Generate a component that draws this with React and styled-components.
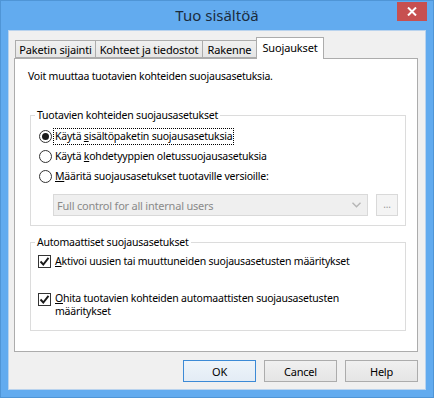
import React from 'react';
import styled, { createGlobalStyle } from 'styled-components';

const GlobalStyle = createGlobalStyle`
  html, body {
    margin: 0;
    padding: 0;
  }
  body {
    font-family: "Noto Sans", "Liberation Sans", sans-serif;
    font-size: 10.5px;
    letter-spacing: -0.22px;
    color: #000;
  }
  * {
    box-sizing: border-box;
  }
`;

// Window frame
const Window = styled.div`
  width: 434px;
  height: 398px;
  background: #62abef;
  border: 1px solid #4f95d6;
  display: flex;
  flex-direction: column;
  padding: 0 7px 7px 7px;
`;

const TitleBar = styled.div`
  height: 29px;
  display: grid;
  grid-template-columns: 1fr auto 1fr;
  align-items: start;
`;

const Title = styled.div`
  grid-column: 2;
  font-size: 15px;
  letter-spacing: 0;
  line-height: 29px;
  color: #1b2b3d;
`;

const CloseButton = styled.div`
  grid-column: 3;
  justify-self: end;
  width: 30px;
  height: 19px;
  margin-top: 1px;
  margin-right: -1px;
  background: #c75050;
  display: flex;
  align-items: center;
  justify-content: center;
`;

const Client = styled.div`
  flex: 1;
  background: #f0f0f0;
  border: 1px solid #b9d3ee;
  display: flex;
  flex-direction: column;
  padding: 6px 7px 0 5px;
`;

// Tabs
const TabRow = styled.div`
  height: 21px;
  display: flex;
  align-items: flex-end;
  margin-left: 2px;
`;

const Tab = styled.div`
  width: ${({ w }) => w}px;
  height: ${({ active }) => (active ? 22 : 18)}px;
  margin-left: -1px;
  margin-bottom: ${({ active }) => (active ? -1 : 0)}px;
  border: 1px solid #acacac;
  border-bottom: ${({ active }) => (active ? 'none' : '1px solid #acacac')};
  background: ${({ active }) => (active ? '#fff' : 'linear-gradient(#f0f0f0, #e5e5e5)')};
  position: relative;
  z-index: ${({ active }) => (active ? 2 : 1)};
  display: flex;
  justify-content: center;
  align-items: ${({ active }) => (active ? 'flex-start' : 'center')};
  padding-top: ${({ active }) => (active ? 2 : 0)}px;
  white-space: nowrap;
  font-size: 11px;
  letter-spacing: -0.15px;
  line-height: 15px;
`;

const Panel = styled.div`
  flex: 1;
  background: #fff;
  border: 1px solid #acacac;
  padding: 10px 11px 0 13px;
  display: flex;
  flex-direction: column;
`;

const Intro = styled.div`
  line-height: 15px;
`;

const Group = styled.fieldset`
  margin: ${({ top }) => top}px 0 0 2px;
  border: 1px solid #dcdcdc;
  padding: 0 7px ${({ bottom }) => bottom}px 8px;
  min-width: 0;
`;

const Legend = styled.legend`
  margin-left: -4px;
  padding: 0 2px;
  line-height: 15px;
`;

const OptionRow = styled.div`
  display: flex;
  align-items: ${({ multi }) => (multi ? 'flex-start' : 'center')};
  min-height: 20px;
  margin-top: ${({ top }) => top || 0}px;
`;

const Radio = styled.span`
  width: 13px;
  height: 13px;
  border-radius: 50%;
  border: 1px solid #333;
  background: #fff;
  display: flex;
  align-items: center;
  justify-content: center;
  flex-shrink: 0;
  margin-right: 2px;

  &::after {
    content: '';
    display: ${({ checked }) => (checked ? 'block' : 'none')};
    width: 7px;
    height: 7px;
    border-radius: 50%;
    background: #1a1a1a;
  }
`;

const Check = styled.span`
  width: 13px;
  height: 13px;
  border: 1px solid #333;
  background: #fff;
  display: flex;
  align-items: center;
  justify-content: center;
  flex-shrink: 0;
  margin-right: 3px;
  margin-left: -1px;
  margin-top: ${({ multi }) => (multi ? 1 : 0)}px;
`;

const Label = styled.span`
  line-height: ${({ multi }) => (multi ? 13 : 15)}px;
  padding: 0 1px;
  outline: ${({ focused }) => (focused ? '1px dotted #000' : 'none')};
  outline-offset: 0;
  white-space: nowrap;
`;

const ComboRow = styled.div`
  display: flex;
  gap: 8px;
  margin: 8px 0 0 14px;
`;

const Combo = styled.div`
  width: 315px;
  height: 22px;
  border: 1px solid #d9d9d9;
  background: #efefef;
  color: #8a8a8a;
  font-size: 11px;
  display: flex;
  align-items: center;
  justify-content: space-between;
  padding: 0 6px 0 3px;
`;

const SmallButton = styled.div`
  width: 22px;
  height: 22px;
  border: 1px solid #d9d9d9;
  background: #f4f4f4;
  color: #9a9a9a;
  display: flex;
  align-items: center;
  justify-content: center;
  font-size: 10px;
  padding-bottom: 3px;
`;

// Footer
const Footer = styled.div`
  height: 37px;
  display: flex;
  justify-content: flex-end;
  gap: 8px;
  padding-top: 8px;
`;

const Button = styled.div`
  width: 73px;
  height: 22px;
  border: 1px solid ${({ primary }) => (primary ? '#3c8ad6' : '#acacac')};
  background: ${({ primary }) => (primary ? 'linear-gradient(#eef4fa, #e3ecf5)' : 'linear-gradient(#f0f0f0, #e5e5e5)')};
  display: flex;
  align-items: center;
  justify-content: center;
  font-size: 11px;
  line-height: 15px;
`;

const CheckMark = () => (
  <svg width="11" height="11" viewBox="0 0 11 11">
    <path d="M1.5 5.5 L4.3 8.5 L9.5 1.8" fill="none" stroke="#1a1a1a" strokeWidth="1.9" />
  </svg>
);

const Chevron = () => (
  <svg width="9" height="6" viewBox="0 0 9 6">
    <path d="M0.5 0.8 L4.5 4.8 L8.5 0.8" fill="none" stroke="#b5b5b5" strokeWidth="1.4" />
  </svg>
);

const tabs = [
  { label: 'Paketin sijainti', w: 81 },
  { label: 'Kohteet ja tiedostot', w: 108 },
  { label: 'Rakenne', w: 55 },
  { label: 'Suojaukset', w: 68, active: true },
];

const App = () => (
  <>
    <GlobalStyle />
    <Window>
      <TitleBar>
        <Title>Tuo sisältöä</Title>
        <CloseButton>
          <svg width="10" height="9" viewBox="0 0 10 9">
            <path d="M1 0.5 L9 8.5 M9 0.5 L1 8.5" stroke="#fff" strokeWidth="2" />
          </svg>
        </CloseButton>
      </TitleBar>
      <Client>
        <TabRow>
          {tabs.map((t) => (
            <Tab key={t.label} w={t.w} active={t.active}>
              {t.label}
            </Tab>
          ))}
        </TabRow>
        <Panel>
          <Intro>Voit muuttaa tuotavien kohteiden suojausasetuksia.</Intro>
          <Group top={24} bottom={9}>
            <Legend>Tuotavien kohteiden suojausasetukset</Legend>
            <OptionRow top={3}>
              <Radio checked />
              <Label focused>
                Käytä <u>s</u>isältöpaketin suojausasetuksia
              </Label>
            </OptionRow>
            <OptionRow>
              <Radio />
              <Label>
                Käytä <u>k</u>ohdetyyppien oletussuojausasetuksia
              </Label>
            </OptionRow>
            <OptionRow>
              <Radio />
              <Label>
                <u>M</u>ääritä suojausasetukset tuotaville versioille:
              </Label>
            </OptionRow>
            <ComboRow>
              <Combo>
                <span>Full control for all internal users</span>
                <Chevron />
              </Combo>
              <SmallButton>...</SmallButton>
            </ComboRow>
          </Group>
          <Group top={9} bottom={12}>
            <Legend>Automaattiset suojausasetukset</Legend>
            <OptionRow top={1}>
              <Check>
                <CheckMark />
              </Check>
              <Label>
                <u>A</u>ktivoi uusien tai muuttuneiden suojausasetusten määritykset
              </Label>
            </OptionRow>
            <OptionRow multi top={21}>
              <Check multi>
                <CheckMark />
              </Check>
              <Label multi>
                <u>O</u>hita tuotavien kohteiden automaattisten suojausasetusten
                <br />
                määritykset
              </Label>
            </OptionRow>
          </Group>
        </Panel>
        <Footer>
          <Button primary>OK</Button>
          <Button>Cancel</Button>
          <Button>Help</Button>
        </Footer>
      </Client>
    </Window>
  </>
);

export default App;
